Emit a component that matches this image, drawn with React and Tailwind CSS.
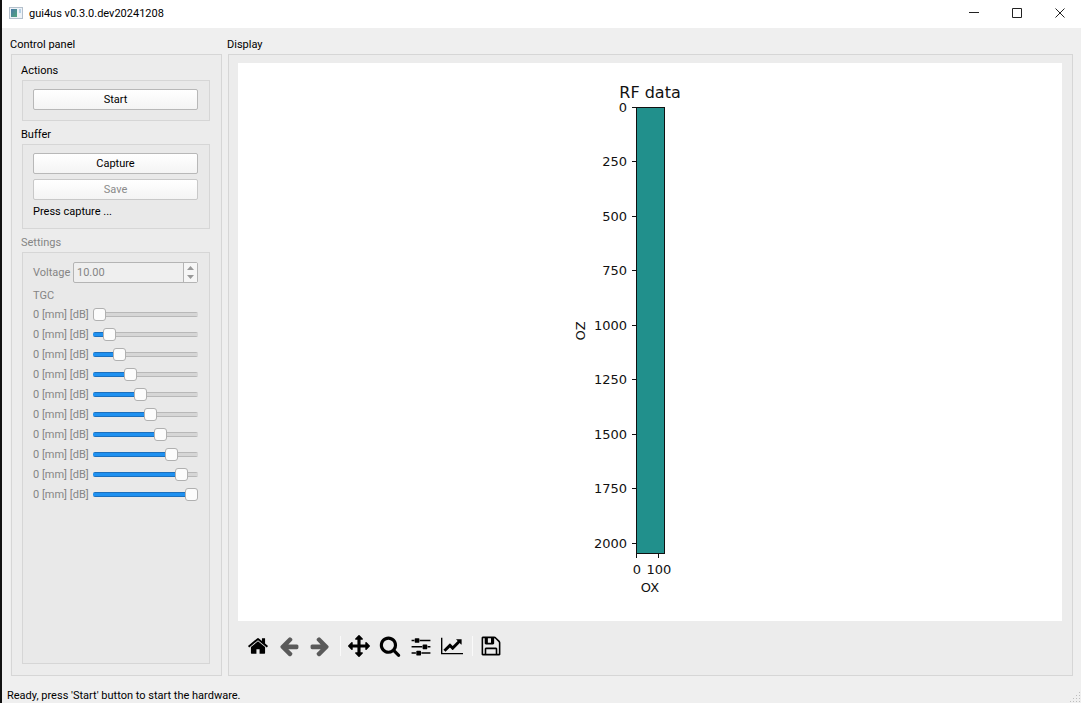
import { useState } from "react";

const ICONS = {
  home: "M1472 992v480q0 26-19 45t-45 19h-384v-384h-256v384h-384q-26 0-45-19t-19-45v-480q0-1 .5-3t.5-3l575-474 575 474q1 2 1 6zm223-69l-62 74q-8 9-21 11h-3q-13 0-21-7l-692-577-692 577q-12 8-24 7-13-2-21-11l-62-74q-8-10-7-23.5t11-21.5l719-599q32-26 76-26t76 26l244 204v-195q0-14 9-23t23-9h192q14 0 23 9t9 23v408l219 182q10 8 11 21.5t-7 23.5z",
  back: "M1664 896v128q0 53-32.5 90.5t-84.5 37.5h-704l293 294q38 36 38 90t-38 90l-75 76q-37 37-90 37-52 0-91-37l-651-652q-37-37-37-90 0-52 37-91l651-650q38-38 91-38 52 0 90 38l75 74q38 38 38 91t-38 91l-293 293h704q52 0 84.5 37.5t32.5 90.5z",
  move: "M1792 896q0 26-19 45l-256 256q-19 19-45 19t-45-19-19-45v-128h-384v384h128q26 0 45 19t19 45-19 45l-256 256q-19 19-45 19t-45-19l-256-256q-19-19-19-45t19-45 45-19h128v-384h-384v128q0 26-19 45t-45 19-45-19l-256-256q-19-19-19-45t19-45l256-256q19-19 45-19t45 19 19 45v128h384v-384h-128q-26 0-45-19t-19-45 19-45l256-256q19-19 45-19t45 19l256 256q19 19 19 45t-19 45-45 19h-128v384h384v-128q0-26 19-45t45-19 45 19l256 256q19 19 19 45z",
  search: "M1216 832q0-185-131.5-316.5t-316.5-131.5-316.5 131.5-131.5 316.5 131.5 316.5 316.5 131.5 316.5-131.5 131.5-316.5zm512 832q0 52-38 90t-90 38q-54 0-90-38l-343-342q-179 124-399 124-143 0-273.5-55.5t-225-150-150-225-55.5-273.5 55.5-273.5 150-225 225-150 273.5-55.5 273.5 55.5 225 150 150 225 55.5 273.5q0 220-124 399l343 343q37 37 37 90z",
  sliders: "M480 1408v128h-352v-128h352zm352-128q26 0 45 19t19 45v256q0 26-19 45t-45 19h-256q-26 0-45-19t-19-45v-256q0-26 19-45t45-19h256zm160-384v128h-864v-128h864zm-640-512v128h-224v-128h224zm1312 1024v128h-736v-128h736zm-960-1152q26 0 45 19t19 45v256q0 26-19 45t-45 19h-256q-26 0-45-19t-19-45v-256q0-26 19-45t45-19h256zm640 512q26 0 45 19t19 45v256q0 26-19 45t-45 19h-256q-26 0-45-19t-19-45v-256q0-26 19-45t45-19h256zm320 128v128h-224v-128h224zm0-512v128h-864v-128h864z",
  chart: "M2048 1536v128h-2048v-1536h128v1408h1920zM1920 288v435q0 21-19.5 29.5t-35.5-7.5l-121-121-633 633q-10 10-23 10t-23-10l-233-233-416 416-192-192 585-585q10-10 23-10t23 10l233 233 464-464-121-121q-16-16-7.5-35.5t29.5-19.5h435q14 0 23 9t9 23z",
  save: "M512 1536h768v-384h-768v384zM1408 1536h128v-896q0-14-10-38.5t-20-34.5l-281-281q-10-10-34-20t-39-10v416q0 40-28 68t-68 28h-576q-40 0-68-28t-28-68v-416h-128v1280h128v-416q0-40 28-68t68-28h832q40 0 68 28t28 68v416zM896 608v-320q0-13-9.5-22.5t-22.5-9.5h-192q-13 0-22.5 9.5t-9.5 22.5v320q0 13 9.5 22.5t22.5 9.5h192q13 0 22.5-9.5t9.5-22.5zM1664 640v928q0 40-28 68t-68 28h-1344q-40 0-68-28t-28-68v-1344q0-40 28-68t68-28h928q40 0 88 20t76 48l280 280q28 28 48 76t20 88z",
};

function ToolButton({ icon, label, disabled = false, mirrored = false, viewBox = "0 0 1792 1792" }) {
  return (
    <button type="button" aria-label={label} disabled={disabled} className="size-[22px] text-black disabled:text-[#5a5a5a]">
      <svg viewBox={viewBox} className="size-full" fill="currentColor">
        <path d={ICONS[icon]} transform={mirrored ? "translate(1792 0) scale(-1 1)" : undefined} />
      </svg>
    </button>
  );
}

function Separator() {
  return <span className="-mr-0.5 h-5 w-px bg-[#fafafa]" />;
}

function WindowButton({ label, path }) {
  return (
    <button type="button" aria-label={label} className="flex h-[26px] w-[43px] items-center justify-center">
      <svg viewBox="0 0 10 10" className="size-2.5" fill="none" stroke="#222">
        <path d={path} />
      </svg>
    </button>
  );
}

function GroupBox({ title, className = "", boxClass = "", children }) {
  return (
    <section className={`flex flex-col gap-0.5 ${className}`}>
      <h2 className="h-4 leading-[18px]">{title}</h2>
      <div className={`ml-px flex flex-col border border-[#d6d6d6] ${boxClass}`}>{children}</div>
    </section>
  );
}

function PushButton({ children, disabled }) {
  return (
    <button
      type="button"
      disabled={disabled}
      className="h-[21px] shrink-0 rounded-xs border border-[#b8b8b8] bg-linear-to-b from-white to-[#f4f4f4] pt-0.5 text-black disabled:border-[#c8c8c8] disabled:text-[#8a8a8a]"
    >
      {children}
    </button>
  );
}

function GainSlider({ index, value, onChange }) {
  const id = `tgc-${index}`;
  return (
    <div className="flex h-5 items-center gap-1">
      <label htmlFor={id} className="w-14 shrink-0 pt-0.5 whitespace-nowrap">0 [mm] [dB]</label>
      <input
        id={id}
        type="range"
        min="0"
        max="9"
        disabled
        value={value}
        onChange={(e) => onChange(Number(e.target.value))}
        style={{ "--fill": `${(value / 9) * 100}%` }}
        className="h-3 w-0 min-w-0 flex-1 appearance-none bg-transparent [&::-webkit-slider-runnable-track]:h-[5px] [&::-webkit-slider-runnable-track]:rounded-xs [&::-webkit-slider-runnable-track]:bg-[linear-gradient(#1c70bd_1px,#1e90f0_1px,#1e90f0_4px,#1c70bd_4px),linear-gradient(#b8b8b8_1px,#d6d6d6_1px,#d6d6d6_4px,#b8b8b8_4px)] [&::-webkit-slider-runnable-track]:bg-no-repeat [&::-webkit-slider-runnable-track]:bg-size-[var(--fill)_100%,100%_100%] [&::-webkit-slider-thumb]:-mt-1 [&::-webkit-slider-thumb]:size-[13px] [&::-webkit-slider-thumb]:appearance-none [&::-webkit-slider-thumb]:rounded-[3px] [&::-webkit-slider-thumb]:border [&::-webkit-slider-thumb]:border-[#b0b0b0] [&::-webkit-slider-thumb]:bg-[#fcfcfc]"
      />
    </div>
  );
}

const Z_TICKS = [0, 250, 500, 750, 1000, 1250, 1500, 1750, 2000];

function RfPlot() {
  return (
    <svg viewBox="0 0 824 558" className="h-full w-full" fontFamily="DejaVu Sans, sans-serif" fontSize="13" fill="#111">
      <rect x="398.5" y="44.5" width="28" height="446" fill="#21908c" stroke="#111" />
      <text x="412" y="35" fontSize="16" textAnchor="middle">RF data</text>
      {Z_TICKS.map((t) => {
        const y = Math.floor((t * 436) / 2000) + 44;
        return (
          <g key={t}>
            <path d={`M394 ${y + 0.5}h4`} stroke="#111" />
            <text x="389" y={y + 5} textAnchor="end">{t}</text>
          </g>
        );
      })}
      <path d="M398.5 491v4M420.5 491v4" stroke="#111" />
      <text x="399" y="511" textAnchor="middle">0</text>
      <text x="421" y="511" textAnchor="middle">100</text>
      <text x="412" y="529" textAnchor="middle">OX</text>
      <text transform="translate(347 268) rotate(-90)" textAnchor="middle">OZ</text>
    </svg>
  );
}

export default function App() {
  const [gains, setGains] = useState([0, 1, 2, 3, 4, 5, 6, 7, 8, 9]);
  const [voltage, setVoltage] = useState("10.00");

  return (
    <div className="flex h-screen flex-col border-l-2 border-[#111] bg-[#efefef] font-[Roboto,sans-serif] text-[11px] text-black">
      <header className="flex h-7 shrink-0 items-center bg-white pb-0.5 pl-[7px]">
        <svg viewBox="0 0 14 12" className="h-3 w-3.5">
          <defs>
            <linearGradient id="appicon" x1="0" y1="0" x2="1" y2="1">
              <stop offset="0" stopColor="#4a78a8" />
              <stop offset="1" stopColor="#4fa67c" />
            </linearGradient>
          </defs>
          <rect x=".5" y=".5" width="13" height="11" fill="#eef3f8" stroke="#b4c0cc" />
          <rect x="2" y="2" width="6" height="8" fill="url(#appicon)" />
          <rect x="10" y="2" width="2" height="4" fill="#b4d0e4" />
        </svg>
        <h1 className="ml-1.5 h-4 leading-[18px]">gui4us v0.3.0.dev20241208</h1>
        <div className="ml-auto flex items-center">
          <WindowButton label="Minimize" path="M0 4.5h10" />
          <WindowButton label="Maximize" path="M.5 .5h9v9h-9z" />
          <WindowButton label="Close" path="M.5 .5l9 9M9.5 .5l-9 9" />
        </div>
      </header>

      <main className="flex min-h-0 flex-1 gap-[5px] pt-2 pr-2 pl-2">
        <GroupBox title="Control panel" className="w-[212px] shrink-0" boxClass="flex-1 bg-[#ececec] pt-[7px] pr-[11px] pb-[11px] pl-[9px] gap-[5px]">
          <GroupBox title="Actions" boxClass="bg-[#e9e9e9] pl-2.5 pr-[11px] pt-2 pb-2.5">
            <PushButton>Start</PushButton>
          </GroupBox>
          <GroupBox title="Buffer" boxClass="bg-[#e9e9e9] gap-[5px] pl-2.5 pr-[11px] pt-2 pb-2.5">
            <PushButton>Capture</PushButton>
            <PushButton disabled>Save</PushButton>
            <p className="h-[13px] leading-[14px]">Press capture ...</p>
          </GroupBox>
          <GroupBox title="Settings" className="flex-1 text-[#858585]" boxClass="flex-1 bg-[#e9e9e9] pl-2.5 pr-[11px] pt-[9px] pb-2.5">
            <div className="flex items-center gap-[3px]">
              <label htmlFor="voltage" className="w-[37px] shrink-0 pt-0.5">Voltage</label>
              <div className="flex h-[21px] min-w-0 flex-1 rounded-xs border border-[#b4b4b4] bg-[#efefef]">
                <input
                  id="voltage"
                  type="text"
                  disabled
                  value={voltage}
                  onChange={(e) => setVoltage(e.target.value)}
                  className="w-0 min-w-0 flex-1 bg-transparent pt-0.5 pl-[3px]"
                />
                <div className="flex w-3.5 flex-col border-l border-[#b4b4b4] bg-[#f6f6f6]">
                  <button type="button" disabled aria-label="Increase voltage" className="flex flex-1 items-center justify-center">
                    <svg viewBox="0 0 7 4" className="h-1 w-[7px]" fill="#999"><path d="M3.5 0L7 4H0z" /></svg>
                  </button>
                  <button type="button" disabled aria-label="Decrease voltage" className="flex flex-1 items-center justify-center">
                    <svg viewBox="0 0 7 4" className="h-1 w-[7px]" fill="#999"><path d="M3.5 4L7 0H0z" /></svg>
                  </button>
                </div>
              </div>
            </div>
            <p className="mt-1 h-[17px] leading-[17px]">TGC</p>
            {gains.map((g, i) => (
              <GainSlider key={i} index={i} value={g} onChange={(v) => setGains(gains.map((x, j) => (j === i ? v : x)))} />
            ))}
          </GroupBox>
        </GroupBox>

        <GroupBox title="Display" className="min-w-0 flex-1" boxClass="min-h-0 flex-1 bg-[#ececec] pt-2 pr-2.5 pl-[9px]">
          <div className="min-h-0 flex-1 bg-white">
            <RfPlot />
          </div>
          <div className="flex h-[54px] shrink-0 items-center gap-[9px] pb-1 pl-[9px]">
            <ToolButton icon="home" label="Home" />
            <ToolButton icon="back" label="Back" disabled />
            <ToolButton icon="back" label="Forward" disabled mirrored />
            <Separator />
            <ToolButton icon="move" label="Pan" />
            <ToolButton icon="search" label="Zoom" />
            <ToolButton icon="sliders" label="Configure subplots" />
            <ToolButton icon="chart" label="Edit axis" viewBox="0 -128 2048 2048" />
            <Separator />
            <ToolButton icon="save" label="Save figure" />
          </div>
        </GroupBox>
      </main>

      <footer className="flex h-[27px] shrink-0 items-end justify-between pl-[5px]">
        <p className="h-4 leading-[18px]">Ready, press 'Start' button to start the hardware.</p>
        <svg viewBox="0 0 12 12" className="size-3" fill="#bdbdbd">
          {[0, 1, 2, 3].map((r) =>
            Array.from({ length: r + 1 }, (_, c) => (
              <rect key={`${r}-${c}`} x={10 - c * 3} y={1 + r * 3} width="1" height="1" />
            ))
          )}
        </svg>
      </footer>
    </div>
  );
}
